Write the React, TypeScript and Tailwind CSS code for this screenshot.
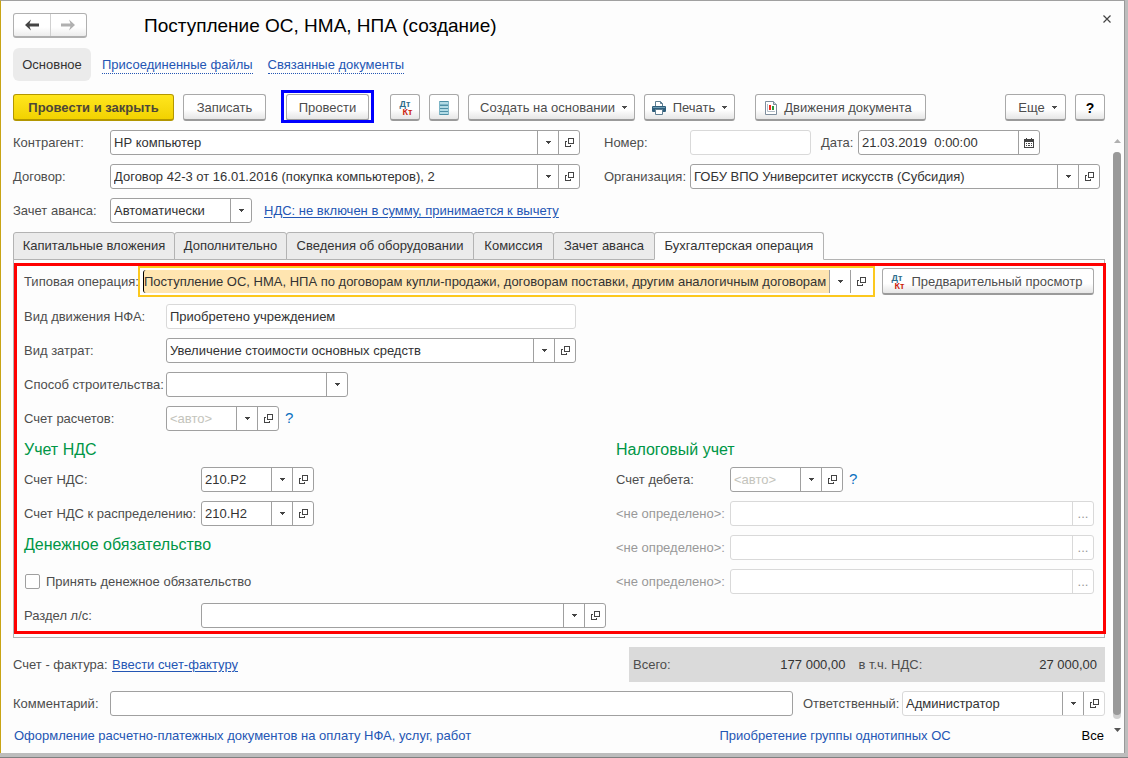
import { useId } from "react";
import type { ReactNode } from "react";
import clsx from "clsx";

function ArrowIcon() {
  return (
    <svg width="5" height="3" viewBox="0 0 5 3" fill="currentColor" shapeRendering="crispEdges" aria-hidden="true">
      <path d="M0 0h5v1H4v1H3v1H2V2H1V1H0z" />
    </svg>
  );
}

function OpenIcon() {
  return (
    <svg width="9" height="9" viewBox="0 0 9 9" fill="none" stroke="currentColor" shapeRendering="crispEdges" aria-hidden="true">
      <path d="M3.500.5h5v5h-5z" />
      <path d="M2 3.500H.5v5h5V7" />
    </svg>
  );
}

function CalendarIcon() {
  return (
    <svg width="10" height="10" viewBox="0 0 10 10" shapeRendering="crispEdges" aria-hidden="true">
      <path d="M.5 1.500h9v8h-9z" fill="#fff" stroke="#444" />
      <path d="M0 1h10v3H0zM2 0h1v2H2zM7 0h1v2H7z" fill="#444" />
      <path d="M2 5h1v1H2zM4 5h2v1H4zM7 5h1v1H7zM2 7h1v1H2zM4 7h2v1H4zM7 7h1v1H7z" fill="#444" />
    </svg>
  );
}

function ListIcon() {
  return (
    <svg width="10" height="14" viewBox="0 0 10 14" shapeRendering="crispEdges" aria-hidden="true">
      <path d="M0 0h10v14H0z" fill="#b2dbe5" />
      <path d="M0 0h10v1H0zM0 4h10v1H0zM0 7h10v1H0zM0 10h10v1H0zM0 13h10v1H0z" fill="#4d8fa6" />
      <path d="M0 3h10v1H0zM9 0h1v14H9zM0 0h1v14H0z" fill="#7fb6c7" />
    </svg>
  );
}

function PrinterIcon() {
  return (
    <svg width="14" height="14" viewBox="0 0 14 14" aria-hidden="true">
      <path d="M3.500 5V.5h5l2 2V5" fill="#fff" stroke="#5f7f92" />
      <path d="M8.500.5v2h2" fill="none" stroke="#5f7f92" />
      <rect x="0" y="5" width="14" height="6" rx="1" fill="#2f5f7c" />
      <path d="M1 6.500h12" stroke="#6f9db5" />
      <path d="M3.500 8.500h7v5h-7z" fill="#fff" stroke="#5f7f92" />
    </svg>
  );
}

function ReportIcon() {
  return (
    <svg width="12" height="14" viewBox="0 0 12 14" aria-hidden="true">
      <path d="M.5.5h8l3 3v10H.5z" fill="#fff" stroke="#7d8d9c" />
      <path d="M8.500.5v3h3" fill="#c9d2da" stroke="#7d8d9c" />
      <path d="M2.500 3v7.500H10" fill="none" stroke="#b4bec8" />
      <path d="M4 4h2v5H4z" fill="#f02a1d" />
      <path d="M7 5h2v4H7z" fill="#2a9a3c" />
    </svg>
  );
}

function DtKtIcon() {
  return (
    <span className="flex w-[15px] flex-col text-[9px] leading-2 font-bold" aria-hidden="true">
      <span className="text-[#2f6d8c]">Дт</span>
      <span className="self-end text-[#cc1f10]">Кт</span>
    </span>
  );
}

function NavArrow({ flip = false }: { flip?: boolean }) {
  return (
    <svg width="14" height="12" viewBox="0 0 14 12" className={clsx(flip && "rotate-180")} aria-hidden="true">
      <path d="M0 6l6-5.500-1.500 4H14v3H4.500l1.500 4z" fill="currentColor" />
    </svg>
  );
}

type ButtonProps = {
  children: ReactNode;
  className?: string;
  label?: string;
  primary?: boolean;
};

function Button({ children, className, label, primary }: ButtonProps) {
  return (
    <button
      type="button"
      aria-label={label}
      className={clsx(
        "flex h-[27px] shrink-0 items-center justify-center rounded-[3px] border border-b-2 pt-px whitespace-nowrap",
        primary
          ? "border-[#b39700] bg-linear-to-b from-[#ffe61c] to-[#f2d200] font-bold text-[#4d4637]"
          : "border-[#a9a9a9] border-b-[#9a9a9a] bg-linear-to-b from-white from-60% to-[#e6e6e6] text-[#4d4d4d]",
        className,
      )}
    >
      {children}
    </button>
  );
}

type FieldProps = {
  label: string;
  labelClass?: string;
  boxClass?: string;
  value?: string;
  placeholder?: string;
  buttons?: ("arrow" | "open" | "calendar" | "more")[];
  muted?: boolean;
  mutedLabel?: boolean;
  softBorder?: boolean;
  help?: boolean;
};

const buttonContent = {
  arrow: { title: "Выбрать", icon: <ArrowIcon /> },
  open: { title: "Открыть", icon: <OpenIcon /> },
  calendar: { title: "Календарь", icon: <CalendarIcon /> },
  more: { title: "Подробнее", icon: <span className="text-[#999]">...</span> },
};

function Field({
  label,
  labelClass,
  boxClass = "flex-1",
  value,
  placeholder,
  buttons = [],
  muted,
  mutedLabel,
  softBorder,
  help,
}: FieldProps) {
  const id = useId();
  return (
    <div className="flex h-[25px] items-center">
      <label htmlFor={id} className={clsx("shrink-0 whitespace-nowrap", mutedLabel && "text-[#999]", labelClass)}>
        {label}
      </label>
      <div
        className={clsx(
          "flex h-full min-w-0 rounded-[3px] border bg-white",
          muted || softBorder ? "border-[#d9d9d9]" : "border-[#a0a0a0]",
          boxClass,
        )}
      >
        <input
          id={id}
          type="text"
          defaultValue={value}
          placeholder={placeholder}
          readOnly={muted}
          className="w-0 min-w-0 flex-1 px-[3px] text-[#333] outline-none placeholder:text-[#c4c4bc]"
        />
        {buttons.map((kind) => (
          <button
            key={kind}
            type="button"
            aria-label={buttonContent[kind].title}
            className={clsx(
              "flex w-[21px] shrink-0 items-center justify-center border-l text-[#444]",
              muted ? "border-[#d9d9d9]" : "border-[#a0a0a0]",
            )}
          >
            {buttonContent[kind].icon}
          </button>
        ))}
      </div>
      {help && (
        <button type="button" aria-label="Справка" className="ml-[6px] text-[15px] text-[#0a70c0]">
          ?
        </button>
      )}
    </div>
  );
}

type SelectFieldProps = {
  label: string;
  labelClass: string;
  boxClass: string;
  options: string[];
};

function SelectField({ label, labelClass, boxClass, options }: SelectFieldProps) {
  const id = useId();
  return (
    <div className="flex h-[25px] items-center">
      <label htmlFor={id} className={clsx("shrink-0 whitespace-nowrap", labelClass)}>
        {label}
      </label>
      <div className={clsx("relative h-full rounded-[3px] border border-[#a0a0a0] bg-white", boxClass)}>
        <select id={id} className="h-full w-full appearance-none px-[3px] text-[#333] outline-none">
          {options.map((option) => (
            <option key={option}>{option}</option>
          ))}
        </select>
        <span className="pointer-events-none absolute inset-y-0 right-0 flex w-[21px] items-center justify-center border-l border-[#a0a0a0] text-[#444]">
          <ArrowIcon />
        </span>
      </div>
    </div>
  );
}

function Header() {
  return (
    <header className="pt-3 pr-[19px] pl-3">
      <div className="flex h-[25px] items-center">
        <div className="flex h-[25px] w-[74px] rounded-[3px] border border-b-2 border-[#b0b0b0] bg-linear-to-b from-white from-60% to-[#ececec]">
          <button type="button" aria-label="Назад" className="flex flex-1 items-center justify-center text-[#444]">
            <NavArrow />
          </button>
          <button
            type="button"
            aria-label="Вперед"
            className="flex flex-1 items-center justify-center border-l border-[#d0d0d0] text-[#b0b0b0]"
          >
            <NavArrow flip />
          </button>
        </div>
        <h1 className="ml-[57px] flex-1 pt-0.5 text-[19px] text-black">Поступление ОС, НМА, НПА (создание)</h1>
        <button type="button" aria-label="Закрыть" className="-mr-2 flex size-3 items-center justify-center self-start">
          <svg width="8" height="8" viewBox="0 0 8 8" stroke="#444" strokeWidth="1.2" aria-hidden="true">
            <path d="M.5.5l7 7M7.500.5l-7 7" />
          </svg>
        </button>
      </div>
      <nav className="mt-[10px] flex h-[33px] items-center">
        <a href="#main" className="flex h-full w-[78px] items-center justify-center rounded-md bg-[#ebebeb] pt-px text-[#333]">
          Основное
        </a>
        <a href="#files" className="ml-[11px] border-b border-dotted border-[#2456b4] pt-0.5 leading-4 text-[#2456b4]">
          Присоединенные файлы
        </a>
        <a href="#related" className="ml-[15px] border-b border-dotted border-[#2456b4] pt-0.5 leading-4 text-[#2456b4]">
          Связанные документы
        </a>
      </nav>
      <div className="mt-[9px] flex h-[35px] items-center">
        <Button primary className="w-[161px]">
          Провести и закрыть
        </Button>
        <Button className="ml-[9px] w-[83px]">Записать</Button>
        <div className="ml-[15px] h-[33px] self-start overflow-hidden border-3 border-[#0000ff] px-0.5 pt-px">
          <Button className="w-[83px]">Провести</Button>
        </div>
        <Button label="Дт Кт" className="ml-4 w-[30px]">
          <DtKtIcon />
        </Button>
        <Button label="Список" className="ml-[9px] w-[30px]">
          <ListIcon />
        </Button>
        <Button className="ml-[9px] w-[167px] gap-[7px] pl-1">
          Создать на основании <ArrowIcon />
        </Button>
        <Button className="ml-[9px] w-[91px] gap-[7px]">
          <PrinterIcon /> Печать <ArrowIcon />
        </Button>
        <Button className="ml-5 w-[171px] gap-[7px] pr-1">
          <ReportIcon /> Движения документа
        </Button>
        <Button className="ml-auto w-[61px] gap-[7px] pl-1">
          Еще <ArrowIcon />
        </Button>
        <Button label="Справка" className="ml-[9px] w-[30px]">
          <span className="text-sm font-bold text-black">?</span>
        </Button>
      </div>
    </header>
  );
}

const tabs = [
  { title: "Капитальные вложения", width: "w-[162px]" },
  { title: "Дополнительно", width: "w-[113px]" },
  { title: "Сведения об оборудовании", width: "w-[188px]" },
  { title: "Комиссия", width: "w-[81px]" },
  { title: "Зачет аванса", width: "w-[102px]" },
  { title: "Бухгалтерская операция", width: "w-[170px]" },
];

function Tabs() {
  return (
    <div role="tablist" className="relative z-10 mt-[9px] -mb-px flex">
      {tabs.map(({ title, width }, i) => {
        const active = i === tabs.length - 1;
        return (
          <button
            key={title}
            type="button"
            role="tab"
            aria-selected={active}
            className={clsx(
              "flex h-7 items-center justify-center rounded-t-[3px] border border-[#b3b3b3] whitespace-nowrap text-[#333]",
              width,
              i > 0 && "-ml-px",
              active ? "border-b-[#fdfdfd] bg-[#fdfdfd]" : "bg-[#ebebeb]",
            )}
          >
            {title}
          </button>
        );
      })}
    </div>
  );
}

function SectionTitle({ children }: { children: ReactNode }) {
  return <h2 className="flex h-9 items-center pt-0.5 text-base text-[#009646]">{children}</h2>;
}

function OperationPanel() {
  return (
    <section className="border border-[#b3b3b3] py-[3px]">
      <div className="-mr-0.5 border-3 border-[#ff0000] pr-[9px] pb-[3px] pl-[7px]">
        <div className="flex h-[31px] items-center">
          <label htmlFor="operation" className="w-[114px] shrink-0 whitespace-nowrap">
            Типовая операция:
          </label>
          <div className="flex h-full min-w-0 flex-1 border-2 border-[#fcc81e] bg-white p-0.5">
            <input
              id="operation"
              type="text"
              defaultValue="Поступление ОС, НМА, НПА по договорам купли-продажи, договорам поставки, другим аналогичным договорам"
              className="ml-px w-0 min-w-0 flex-1 rounded-l-[3px] border-l border-black bg-[#ffe5b0] text-[#333] outline-none"
            />
            <button
              type="button"
              aria-label="Выбрать"
              className="flex w-[21px] items-center justify-center border-l border-[#a0a0a0] text-[#444]"
            >
              <ArrowIcon />
            </button>
            <button
              type="button"
              aria-label="Открыть"
              className="flex w-[21px] items-center justify-center border-l border-[#a0a0a0] text-[#444]"
            >
              <OpenIcon />
            </button>
          </div>
          <Button className="ml-[7px] w-[212px] gap-[7px] pr-1">
            <DtKtIcon /> Предварительный просмотр
          </Button>
        </div>

        <div className="mt-[7px] flex flex-col gap-[9px]">
          <Field label="Вид движения НФА:" labelClass="w-[142px]" boxClass="w-[410px]" value="Приобретено учреждением" muted />
          <Field
            label="Вид затрат:"
            labelClass="w-[142px]"
            boxClass="w-[410px]"
            value="Увеличение стоимости основных средств"
            buttons={["arrow", "open"]}
          />
          <SelectField label="Способ строительства:" labelClass="w-[142px]" boxClass="w-[182px]" options={[""]} />
          <Field
            label="Счет расчетов:"
            labelClass="w-[142px]"
            boxClass="w-[113px]"
            placeholder="<авто>"
            buttons={["arrow", "open"]}
            help
          />
        </div>

        <div className="grid grid-cols-[592fr_478fr]">
          <div>
            <SectionTitle>Учет НДС</SectionTitle>
            <div className="flex flex-col gap-[9px]">
              <Field label="Счет НДС:" labelClass="w-[177px]" boxClass="w-[113px]" value="210.Р2" buttons={["arrow", "open"]} />
              <Field
                label="Счет НДС к распределению:"
                labelClass="w-[177px]"
                boxClass="w-[113px]"
                value="210.Н2"
                buttons={["arrow", "open"]}
              />
            </div>
            <SectionTitle>Денежное обязательство</SectionTitle>
            <div className="mt-[7px] flex flex-col gap-[9px]">
              <label className="flex h-[25px] items-center gap-[6px] pl-px">
                <input type="checkbox" className="size-[15px] appearance-none rounded-xs border border-[#a0a0a0] bg-white" />
                Принять денежное обязательство
              </label>
              <Field label="Раздел л/с:" labelClass="w-[177px]" boxClass="w-[405px]" buttons={["arrow", "open"]} />
            </div>
          </div>
          <div>
            <SectionTitle>Налоговый учет</SectionTitle>
            <div className="flex flex-col gap-[9px]">
              <Field
                label="Счет дебета:"
                labelClass="w-[114px]"
                boxClass="w-[113px]"
                placeholder="<авто>"
                buttons={["arrow", "open"]}
                help
              />
              <Field label="<не определено>:" labelClass="w-[114px]" buttons={["more"]} muted mutedLabel />
              <Field label="<не определено>:" labelClass="w-[114px]" buttons={["more"]} muted mutedLabel />
              <Field label="<не определено>:" labelClass="w-[114px]" buttons={["more"]} muted mutedLabel />
            </div>
          </div>
        </div>
      </div>
    </section>
  );
}

function Footer() {
  return (
    <footer>
      <div className="mt-[9px] flex h-[35px] items-center">
        <span className="w-[99px]">Счет - фактура:</span>
        <a href="#invoice" className="text-[#2456b4] underline underline-offset-2">
          Ввести счет-фактуру
        </a>
        <dl className="ml-auto flex h-full w-[476px] items-center bg-[#dadada] pr-2 pl-1">
          <dt>Всего:</dt>
          <dd className="flex-1 text-right text-[#333]">177 000,00</dd>
          <dt className="ml-[13px]">в т.ч. НДС:</dt>
          <dd className="flex-1 text-right text-[#333]">27 000,00</dd>
        </dl>
      </div>
      <div className="mt-[9px] flex gap-[10px]">
        <div className="flex-1">
          <Field label="Комментарий:" labelClass="w-[97px]" />
        </div>
        <Field
          label="Ответственный:"
          labelClass="w-[99px]"
          boxClass="w-[203px]"
          value="Администратор"
          buttons={["arrow", "open"]}
          softBorder
        />
      </div>
      <div className="mt-3 grid grid-cols-[705fr_362fr_auto] px-px leading-4">
        <a href="#payment" className="text-[#2456b4]">
          Оформление расчетно-платежных документов на оплату НФА, услуг, работ
        </a>
        <a href="#group" className="text-[#2456b4]">
          Приобретение группы однотипных ОС
        </a>
        <a href="#all" className="text-black">
          Все
        </a>
      </div>
    </footer>
  );
}

export default function App() {
  return (
    <div className="min-h-screen border-b border-[#808080] bg-[#bdbdbd] pr-[3px] pb-1 font-['Liberation_Sans',Arial,sans-serif] text-[13px] text-[#4d4d4d]">
      <div className="border-t border-r border-l border-t-[#a0a0a0] border-r-[#999] border-l-[#c8a415] bg-[#fdfdfd] pb-[9px]">
        <Header />
        <div className="flex">
          <main className="min-w-0 flex-1 pt-[5px] pl-3">
            <div className="grid grid-cols-[567fr_496fr] gap-x-6 pr-[5px]">
              <div className="flex flex-col gap-[9px]">
                <Field label="Контрагент:" labelClass="w-[97px]" value="НР компьютер" buttons={["arrow", "open"]} />
                <Field
                  label="Договор:"
                  labelClass="w-[97px]"
                  value="Договор 42-3 от 16.01.2016 (покупка компьютеров), 2"
                  buttons={["arrow", "open"]}
                />
                <div className="flex items-center gap-3">
                  <SelectField label="Зачет аванса:" labelClass="w-[97px]" boxClass="w-[142px]" options={["Автоматически"]} />
                  <a href="#vat" className="whitespace-nowrap text-[#2456b4] underline underline-offset-2">
                    НДС: не включен в сумму, принимается к вычету
                  </a>
                </div>
              </div>
              <div className="flex flex-col gap-[9px]">
                <div className="flex gap-[10px]">
                  <Field label="Номер:" labelClass="w-[86px]" boxClass="w-[121px]" muted />
                  <Field label="Дата:" labelClass="w-[37px]" boxClass="w-[182px]" value="21.03.2019  0:00:00" buttons={["calendar"]} />
                </div>
                <Field
                  label="Организация:"
                  labelClass="w-[86px]"
                  value="ГОБУ ВПО Университет искусств (Субсидия)"
                  buttons={["arrow", "open"]}
                />
              </div>
            </div>
            <Tabs />
            <OperationPanel />
            <Footer />
          </main>
          <div className="mt-3 mr-[3px] ml-2 flex w-2 flex-col items-center gap-[9px] pb-3" aria-hidden="true">
            <span className="pt-0.5 text-[#b0b0b0]">
              <svg width="7" height="4" viewBox="0 0 7 4" fill="currentColor">
                <path d="M0 4h7L3.500 0z" />
              </svg>
            </span>
            <div className="w-full flex-1 rounded-full bg-[#d0d0d0] pb-1">
              <div className="h-full rounded-full bg-[#999]" />
            </div>
            <svg width="7" height="4" viewBox="0 0 7 4" fill="#555">
              <path d="M0 0h7L3.500 4z" />
            </svg>
          </div>
        </div>
      </div>
    </div>
  );
}
